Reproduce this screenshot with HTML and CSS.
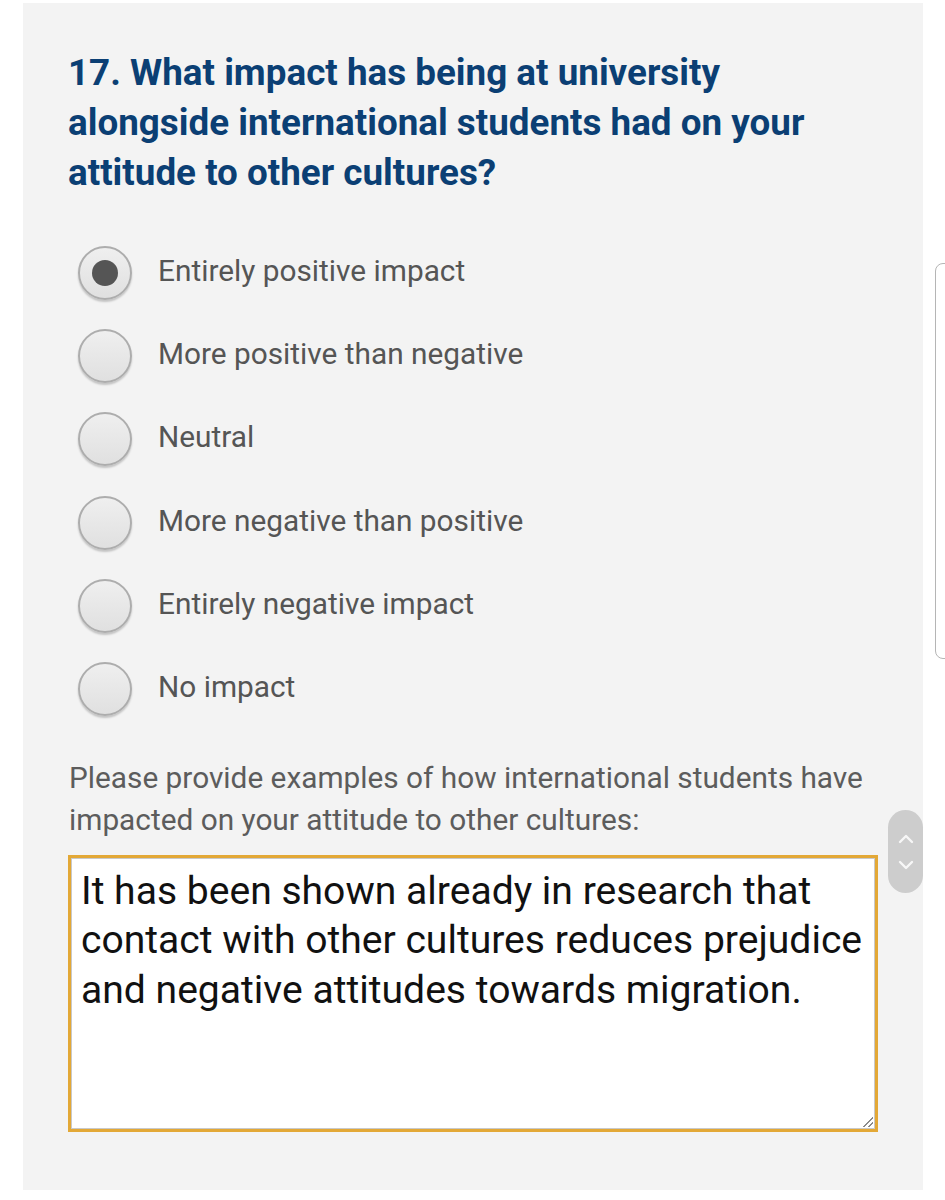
FILE: index.html
```html
<!DOCTYPE html>
<html lang="en">
<head>
<meta charset="utf-8">
<title>Survey question 17</title>
<link rel="stylesheet" href="styles.css">
</head>
<body>
<main class="panel">
  <h2 class="question">17. What impact has being at university alongside international students had on your attitude to other cultures?</h2>
  <ul class="options">
    <li class="option"><span class="radio checked"></span><span class="label">Entirely positive impact</span></li>
    <li class="option"><span class="radio"></span><span class="label">More positive than negative</span></li>
    <li class="option"><span class="radio"></span><span class="label">Neutral</span></li>
    <li class="option"><span class="radio"></span><span class="label">More negative than positive</span></li>
    <li class="option"><span class="radio"></span><span class="label">Entirely negative impact</span></li>
    <li class="option"><span class="radio"></span><span class="label">No impact</span></li>
  </ul>
  <p class="prompt">Please provide examples of how international students have impacted on your attitude to other cultures:</p>
  <div class="answer">It has been shown already in research that contact with other cultures reduces prejudice and negative attitudes towards migration.<span class="grip"></span></div>
</main>
<div class="edge-handle"></div>
<div class="scroll-pill">
  <svg width="20" height="14" viewBox="0 0 20 14"><path d="M4 10 L10 4 L16 10" fill="none" stroke="#f7f7f7" stroke-width="2.4" stroke-linecap="round" stroke-linejoin="round"/></svg>
  <svg width="20" height="14" viewBox="0 0 20 14"><path d="M4 4 L10 10 L16 4" fill="none" stroke="#f7f7f7" stroke-width="2.4" stroke-linecap="round" stroke-linejoin="round"/></svg>
</div>
</body>
</html>
```
FILE: styles.css
```css
html, body {
  margin: 0;
  padding: 0;
  background: #ffffff;
}
body {
  font-family: Roboto, "Noto Sans", Arial, sans-serif;
  padding: 3px 22px 10px 23px;
}
.panel {
  background: #f3f3f3;
  padding: 45px 40px 0 45px;
  box-sizing: border-box;
  height: 1187px;
}
.question {
  margin: 0;
  font-size: 36.8px;
  line-height: 50px;
  font-weight: 700;
  color: #0b3f74;
  width: 780px;
}
.options {
  list-style: none;
  margin: 48px 0 0 0;
  padding: 0 0 0 10px;
  display: flex;
  flex-direction: column;
  gap: 29.2px;
}
.option {
  display: flex;
  align-items: center;
  gap: 26px;
  height: 54px;
}
.radio {
  width: 50px;
  height: 50px;
  border-radius: 50%;
  border: 2px solid #adadad;
  background: linear-gradient(#efefef, #e0e0e0);
  box-shadow: 0 2px 2px rgba(0,0,0,0.2);
  position: relative;
  flex: none;
}
.radio.checked::after {
  content: "";
  position: absolute;
  left: 12px;
  top: 12px;
  width: 26px;
  height: 26px;
  border-radius: 50%;
  background: #555555;
}
.label {
  font-size: 29.8px;
  color: #555555;
  line-height: 40px;
  margin-top: -4px;
}
.prompt {
  margin: 41px 0 0 1px;
  font-size: 29.8px;
  line-height: 42px;
  color: #5c5c5c;
  width: 820px;
}
.answer {
  margin-top: 14px;
  width: 810px;
  height: 277px;
  box-sizing: border-box;
  background: #ffffff;
  border: 3px solid #e3a836;
  box-shadow: inset 1px 1px 0 #c9c9c9, inset -1px -1px 0 #c9c9c9;
  padding: 9px 2px 0 10px;
  font-size: 39.1px;
  line-height: 49.5px;
  color: #111111;
  position: relative;
}
.grip {
  position: absolute;
  right: 2px;
  bottom: 2px;
  width: 10px;
  height: 10px;
  background: linear-gradient(135deg, transparent 45%, #8a8a8a 45%, #8a8a8a 55%, transparent 55%, transparent 70%, #8a8a8a 70%, #8a8a8a 80%, transparent 80%);
}
.edge-handle {
  position: absolute;
  left: 935px;
  top: 263px;
  width: 20px;
  height: 396px;
  border: 1.5px solid #b5b5b5;
  border-radius: 8px;
  box-sizing: border-box;
  background: #ffffff;
}
.scroll-pill {
  position: absolute;
  left: 888px;
  top: 810px;
  width: 35px;
  height: 83px;
  border-radius: 18px;
  background: #cdcdcd;
  display: flex;
  flex-direction: column;
  align-items: center;
  justify-content: center;
  gap: 12px;
}
.scroll-pill svg {
  display: block;
}
```
